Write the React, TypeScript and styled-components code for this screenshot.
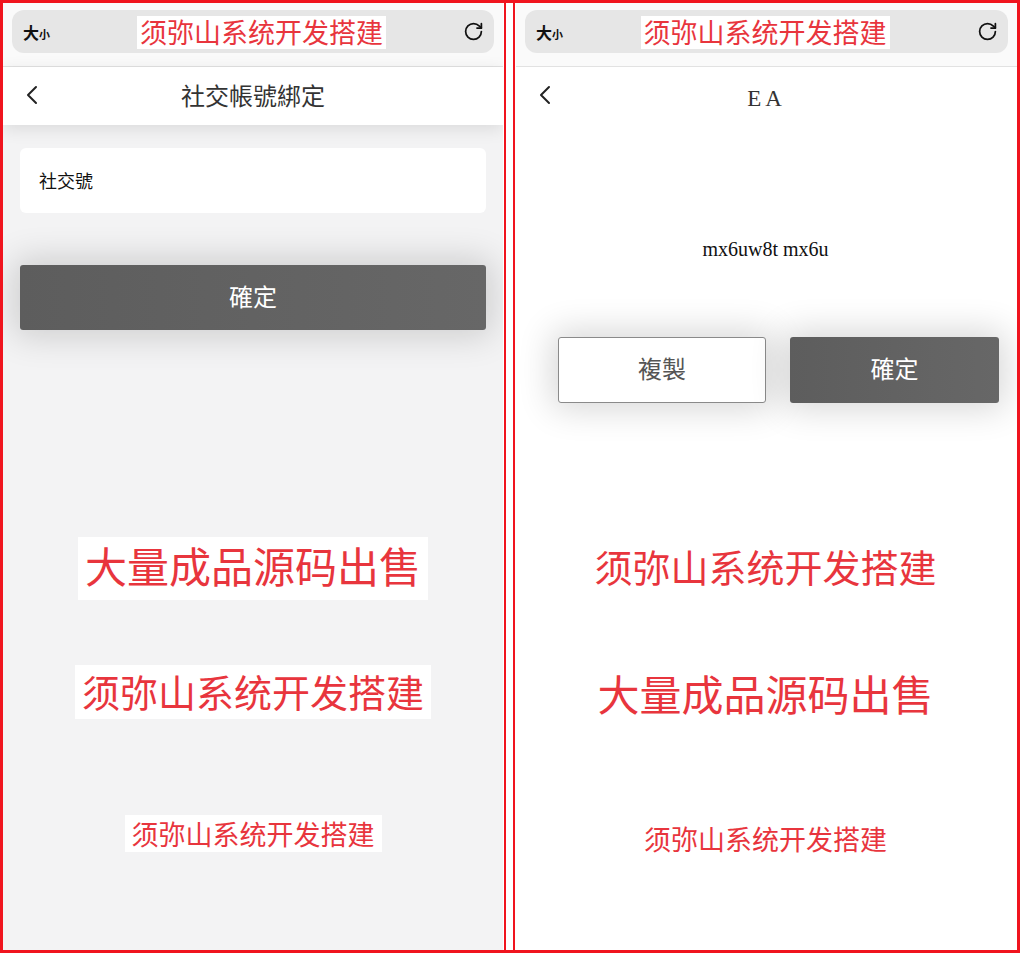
import React from "react";
import styled, { createGlobalStyle } from "styled-components";
import { RotateCw } from "lucide-react";

const GlobalStyle = createGlobalStyle`
  html, body {
    margin: 0;
    padding: 0;
    background: #ffffff;
  }
  * {
    box-sizing: border-box;
  }
`;

const CJK = `"Noto Sans CJK TC", "Noto Sans CJK SC", "Noto Sans", sans-serif`;
const AD_FONT = `"Noto Sans CJK SC", "Noto Sans", sans-serif`;
const SERIF = `"Liberation Serif", "DejaVu Serif", serif`;
const RED = "#e8353d";

const Frame = styled.div`
  width: 1020px;
  height: 953px;
  border: 3px solid #f0141e;
  display: flex;
  background: #fff;
`;

const Panel = styled.div<{ $width: number; $bg: string }>`
  width: ${({ $width }) => $width}px;
  display: flex;
  flex-direction: column;
  background: ${({ $bg }) => $bg};
  overflow: hidden;
`;

const Divider = styled.div`
  width: 11px;
  margin: 0 1px;
  border-left: 2px solid #f0141e;
  border-right: 2px solid #f0141e;
  background: #fff;
`;

/* browser chrome on top of each phone */
const BrowserBar = styled.div`
  height: 64px;
  padding: 7px 9px 0 9px;
  background: #fafafa;
  border-bottom: 1px solid #e2e2e2;
`;

const Pill = styled.div`
  height: 43px;
  border-radius: 12px;
  background: #e6e6e6;
  display: flex;
  align-items: center;
  justify-content: space-between;
  padding: 0 10px 0 11px;
  font-family: ${CJK};
`;

const SizeLabel = styled.div<{ $w: number }>`
  display: flex;
  align-items: baseline;
  font-weight: 700;
  color: #111;
  width: ${({ $w }) => $w}px;
`;

const SizeBig = styled.span`
  font-size: 16px;
`;

const SizeSmall = styled.span`
  font-size: 11px;
`;

const UrlTitle = styled.div`
  background: #fff;
  color: ${RED};
  font-family: ${AD_FONT};
  font-size: 27px;
  line-height: 31px;
  padding: 0 3px 2px;
  margin-top: 1px;
`;

const Reload = styled.div<{ $w: number }>`
  width: ${({ $w }) => $w}px;
  display: flex;
  justify-content: flex-end;
  color: #111;
`;

const Header = styled.div<{ $shadow?: boolean }>`
  height: 58px;
  background: #fff;
  display: flex;
  align-items: center;
  justify-content: center;
  position: relative;
  z-index: 1;
  box-shadow: ${({ $shadow }) =>
    $shadow ? "0 4px 16px rgba(0, 0, 0, 0.1)" : "none"};
`;

const Back = styled.svg`
  position: absolute;
  left: 22px;
  top: 18px;
`;

const Title = styled.div<{ $serif?: boolean }>`
  font-family: ${({ $serif }) => ($serif ? SERIF : CJK)};
  font-size: ${({ $serif }) => ($serif ? "23px" : "24px")};
  color: #333;
  letter-spacing: ${({ $serif }) => ($serif ? "4px" : "0")};
  margin-top: ${({ $serif }) => ($serif ? "5px" : "-4px")};
`;

const Body = styled.div<{ $pad: string }>`
  flex: 1;
  display: flex;
  flex-direction: column;
  align-items: center;
  padding: ${({ $pad }) => $pad};
`;

const InputCard = styled.div`
  align-self: stretch;
  height: 65px;
  background: #fff;
  border-radius: 6px;
  display: flex;
  align-items: center;
  padding: 0 0 2px 19px;
  font-family: ${CJK};
  font-size: 18px;
  color: #111;
`;

const Button = styled.div<{ $ghost?: boolean; $h: number }>`
  height: ${({ $h }) => $h}px;
  display: flex;
  align-items: center;
  justify-content: center;
  padding-bottom: 5px;
  font-family: ${CJK};
  font-size: 24px;
  border-radius: 3px;
  color: ${({ $ghost }) => ($ghost ? "#555" : "#fff")};
  background: ${({ $ghost }) =>
    $ghost ? "#fff" : "linear-gradient(90deg, #5d5d5d, #676767)"};
  border: ${({ $ghost }) => ($ghost ? "1px solid #8a8a8a" : "none")};
  box-shadow: 0 0 34px 6px rgba(0, 0, 0, 0.16);
`;

const WideButton = styled(Button)`
  align-self: stretch;
  margin-top: 52px;
`;

const ButtonRow = styled.div`
  align-self: stretch;
  display: grid;
  grid-template-columns: 208px 209px;
  gap: 24px;
  padding-left: 26px;
  margin-top: 76px;
`;

const Code = styled.div`
  margin-top: 112px;
  font-family: ${SERIF};
  font-size: 20px;
  line-height: 24px;
  color: #111;
`;

const Ad = styled.div<{ $size: number; $h: number; $top: number; $lift?: number }>`
  margin-top: ${({ $top }) => $top}px;
  height: ${({ $h }) => $h}px;
  line-height: ${({ $h, $lift = 0 }) => $h - $lift}px;
  padding: 0 7px ${({ $lift = 0 }) => $lift}px;
  background: #fff;
  color: ${RED};
  font-family: ${AD_FONT};
  font-size: ${({ $size }) => $size}px;
  white-space: nowrap;
`;

const BackIcon = () => (
  <Back width="14" height="20" viewBox="0 0 14 20">
    <polyline
      points="11,2 3,10 11,18"
      fill="none"
      stroke="#222"
      strokeWidth="2"
      strokeLinecap="round"
      strokeLinejoin="round"
    />
  </Back>
);

// side widths decide where the page title sits inside the address pill
const Browser = ({ left, right }: { left: number; right: number }) => (
  <BrowserBar>
    <Pill>
      <SizeLabel $w={left}>
        <SizeBig>大</SizeBig>
        <SizeSmall>小</SizeSmall>
      </SizeLabel>
      <UrlTitle>须弥山系统开发搭建</UrlTitle>
      <Reload $w={right}>
        <RotateCw size={21} strokeWidth={2} />
      </Reload>
    </Pill>
  </BrowserBar>
);

export default function App() {
  return (
    <>
      <GlobalStyle />
      <Frame>
        <Panel $width={500} $bg="#f3f3f4">
          <Browser left={44} right={28} />
          <Header $shadow>
            <BackIcon />
            <Title>社交帳號綁定</Title>
          </Header>
          <Body $pad="23px 17px 0 17px">
            <InputCard>社交號</InputCard>
            <WideButton $h={65}>確定</WideButton>
            <Ad $size={42} $h={63} $top={207} $lift={8}>
              大量成品源码出售
            </Ad>
            <Ad $size={38} $h={54} $top={65} $lift={2}>
              须弥山系统开发搭建
            </Ad>
            <Ad $size={27} $h={37} $top={96}>
              须弥山系统开发搭建
            </Ad>
          </Body>
        </Panel>
        <Divider />
        <Panel $width={501} $bg="#ffffff">
          <Browser left={36} right={40} />
          <Header>
            <BackIcon />
            <Title $serif>EA</Title>
          </Header>
          <Body $pad="0 18px 0 16px">
            <Code>mx6uw8t mx6u</Code>
            <ButtonRow>
              <Button $ghost $h={66}>
                複製
              </Button>
              <Button $h={66}>確定</Button>
            </ButtonRow>
            <Ad $size={38} $h={47} $top={142} $lift={6}>
              须弥山系统开发搭建
            </Ad>
            <Ad $size={42} $h={48} $top={80} $lift={6}>
              大量成品源码出售
            </Ad>
            <Ad $size={27} $h={28} $top={105}>
              须弥山系统开发搭建
            </Ad>
          </Body>
        </Panel>
      </Frame>
    </>
  );
}
